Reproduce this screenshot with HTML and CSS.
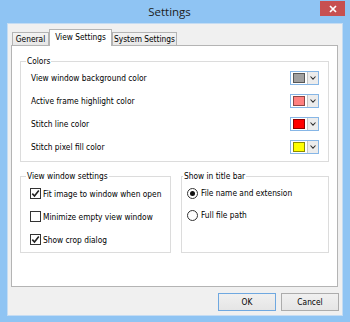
FILE: index.html
```html
<!DOCTYPE html>
<html lang="en">
<head>
  <meta charset="UTF-8" />
  <meta name="viewport" content="width=device-width, initial-scale=1.0"/>
  <title>Settings</title>
  <link rel="stylesheet" href="styles.css">
</head>
<body>

  <div class="window">
    <!-- Title bar -->
    <div class="titlebar">
      <span></span>
      <span class="title">Settings</span>
      <div class="close-btn">
        <svg width="8" height="8" viewBox="0 0 8 8"><path d="M1 1 L7 7 M7 1 L1 7" stroke="#fff" stroke-width="1.7"/></svg>
      </div>
    </div>

    <div class="client">
      <!-- Tabs -->
      <div class="tabs">
        <div class="tab tab-general">General</div>
        <div class="tab tab-view active">View Settings</div>
        <div class="tab tab-system">System Settings</div>
      </div>

      <div class="panel">
        <fieldset class="group colors">
          <legend>Colors</legend>
          <div class="color-row">
            <span>View window background color</span>
            <div class="color-pick">
              <span class="swatch-cell"><span class="swatch" style="background:#a0a0a0"></span></span>
              <span class="drop"><svg width="6" height="4" viewBox="0 0 6 4"><path d="M0.5 0.5 L3 3.2 L5.5 0.5" fill="none" stroke="#333" stroke-width="1.1"/></svg></span>
            </div>
          </div>
          <div class="color-row">
            <span>Active frame highlight color</span>
            <div class="color-pick">
              <span class="swatch-cell"><span class="swatch" style="background:#ff8080"></span></span>
              <span class="drop"><svg width="6" height="4" viewBox="0 0 6 4"><path d="M0.5 0.5 L3 3.2 L5.5 0.5" fill="none" stroke="#333" stroke-width="1.1"/></svg></span>
            </div>
          </div>
          <div class="color-row">
            <span>Stitch line color</span>
            <div class="color-pick">
              <span class="swatch-cell"><span class="swatch" style="background:#ff0000"></span></span>
              <span class="drop"><svg width="6" height="4" viewBox="0 0 6 4"><path d="M0.5 0.5 L3 3.2 L5.5 0.5" fill="none" stroke="#333" stroke-width="1.1"/></svg></span>
            </div>
          </div>
          <div class="color-row">
            <span>Stitch pixel fill color</span>
            <div class="color-pick">
              <span class="swatch-cell"><span class="swatch" style="background:#ffff00"></span></span>
              <span class="drop"><svg width="6" height="4" viewBox="0 0 6 4"><path d="M0.5 0.5 L3 3.2 L5.5 0.5" fill="none" stroke="#333" stroke-width="1.1"/></svg></span>
            </div>
          </div>
        </fieldset>

        <div class="lower">
          <fieldset class="group view-window">
            <legend>View window settings</legend>
            <div class="check-row">
              <span class="checkbox"><svg width="9" height="9" viewBox="0 0 9 9"><path d="M1.3 4.6 L3.5 7 L7.8 1.6" fill="none" stroke="#222" stroke-width="1.6"/></svg></span>
              <span>Fit image to window when open</span>
            </div>
            <div class="check-row">
              <span class="checkbox"></span>
              <span>Minimize empty view window</span>
            </div>
            <div class="check-row">
              <span class="checkbox"><svg width="9" height="9" viewBox="0 0 9 9"><path d="M1.3 4.6 L3.5 7 L7.8 1.6" fill="none" stroke="#222" stroke-width="1.6"/></svg></span>
              <span>Show crop dialog</span>
            </div>
          </fieldset>

          <fieldset class="group title-bar">
            <legend>Show in title bar</legend>
            <div class="radio-row">
              <span class="radio checked"></span>
              <span>File name and extension</span>
            </div>
            <div class="radio-row">
              <span class="radio"></span>
              <span>Full file path</span>
            </div>
          </fieldset>
        </div>
      </div>

      <!-- Dialog buttons -->
      <div class="buttons">
        <div class="btn default">OK</div>
        <div class="btn">Cancel</div>
      </div>
    </div>
  </div>

</body>
</html>
```

FILE: styles.css
```css
* {
  box-sizing: border-box;
}

body {
  margin: 0;
  background: #8fc4f3;
  font-family: "DejaVu Sans Condensed", "Liberation Sans", sans-serif;
  font-size: 8.3px;
  color: #000;
}

.window {
  width: 350px;
  height: 322px;
  display: flex;
  flex-direction: column;
  padding: 0 7px 6px;
  background: #8fc4f3;
}

/* title bar */
.titlebar {
  height: 23px;
  margin: 0 -7px;
  padding-right: 11px;
  display: grid;
  grid-template-columns: 1fr auto 1fr;
  align-items: start;
}

.title {
  font-family: "Open Sans", "Liberation Sans", sans-serif;
  font-size: 11.5px;
  line-height: 23px;
  color: #1c1c1c;
}

.close-btn {
  justify-self: end;
  margin-right: -6px;
  margin-top: 1px;
  width: 25px;
  height: 15px;
  background: #c75050;
  display: flex;
  align-items: center;
  justify-content: center;
}

/* client area */
.client {
  flex: 1;
  background: #f0f0f0;
  border: 1px solid #c4dcf3;
  padding: 5px 4px 0 3px;
  display: flex;
  flex-direction: column;
}

.tabs {
  height: 17px;
  padding-left: 1px;
  display: flex;
  align-items: flex-end;
}

.tab {
  height: 14px;
  border: 1px solid #b4b4b4;
  border-bottom: none;
  background: linear-gradient(#f3f3f3, #e6e6e6);
  text-align: center;
  line-height: 12px;
}

.tab-general { width: 37px; }
.tab-view { width: 63px; }
.tab-system { width: 65px; }

.tab.active {
  position: relative;
  z-index: 1;
  height: 17px;
  background: #fff;
  line-height: 14px;
}

.panel {
  height: 242px;
  margin-top: -1px;
  background: #fff;
  border: 1px solid #b4b4b4;
  padding: 10px 8px 0;
}

/* group boxes */
.group {
  margin: 0;
  min-width: 0;
  border: 1px solid #dcdcdc;
}

.group legend {
  padding: 0 1px;
  line-height: 10px;
}

.colors {
  padding: 1px 9px 3px 5px;
}

.color-row {
  height: 22px;
  margin-bottom: 1px;
  padding-left: 5px;
  display: flex;
  justify-content: space-between;
  align-items: center;
}

.color-row:last-child {
  margin-bottom: 0;
}

.color-pick {
  width: 29px;
  height: 14px;
  display: flex;
  border: 1px solid #86b6e6;
  background: #fff;
}

.swatch-cell {
  width: 16px;
  display: flex;
  align-items: center;
  justify-content: center;
}

.swatch {
  width: 12px;
  height: 10px;
  border: 1px solid rgba(0, 0, 0, 0.45);
}

.drop {
  flex: 1;
  background: #ececec;
  border-left: 1px solid #c6c6c6;
  display: flex;
  align-items: center;
  justify-content: center;
}

.lower {
  margin-top: 9px;
  display: flex;
  gap: 10px;
}

.view-window {
  width: 151px;
  height: 82px;
  padding: 1px 4px 0 5px;
}

.title-bar {
  flex: 1;
  height: 82px;
  padding: 1px 4px 0 1px;
}

.check-row,
.radio-row {
  display: flex;
  align-items: center;
  padding-left: 4px;
}

.check-row {
  height: 23px;
}

.radio-row {
  height: 22px;
}

.checkbox {
  width: 11px;
  height: 11px;
  margin-right: 2px;
  border: 1px solid #333;
  background: #fff;
  display: flex;
  align-items: center;
  justify-content: center;
}

.radio {
  width: 11px;
  height: 11px;
  margin-right: 3px;
  border: 1px solid #333;
  border-radius: 50%;
  background: #fff;
  display: flex;
  align-items: center;
  justify-content: center;
}

.radio.checked::after {
  content: "";
  width: 5px;
  height: 5px;
  border-radius: 50%;
  background: #111;
}

/* buttons */
.buttons {
  margin-top: 6px;
  margin-right: -1px;
  display: flex;
  justify-content: flex-end;
  gap: 5px;
}

.btn {
  width: 58px;
  height: 18px;
  border: 1px solid #acacac;
  background: linear-gradient(#f0f0f0, #e5e5e5);
  text-align: center;
  line-height: 16px;
}

.btn.default {
  border-color: #6fa8e0;
}
```
